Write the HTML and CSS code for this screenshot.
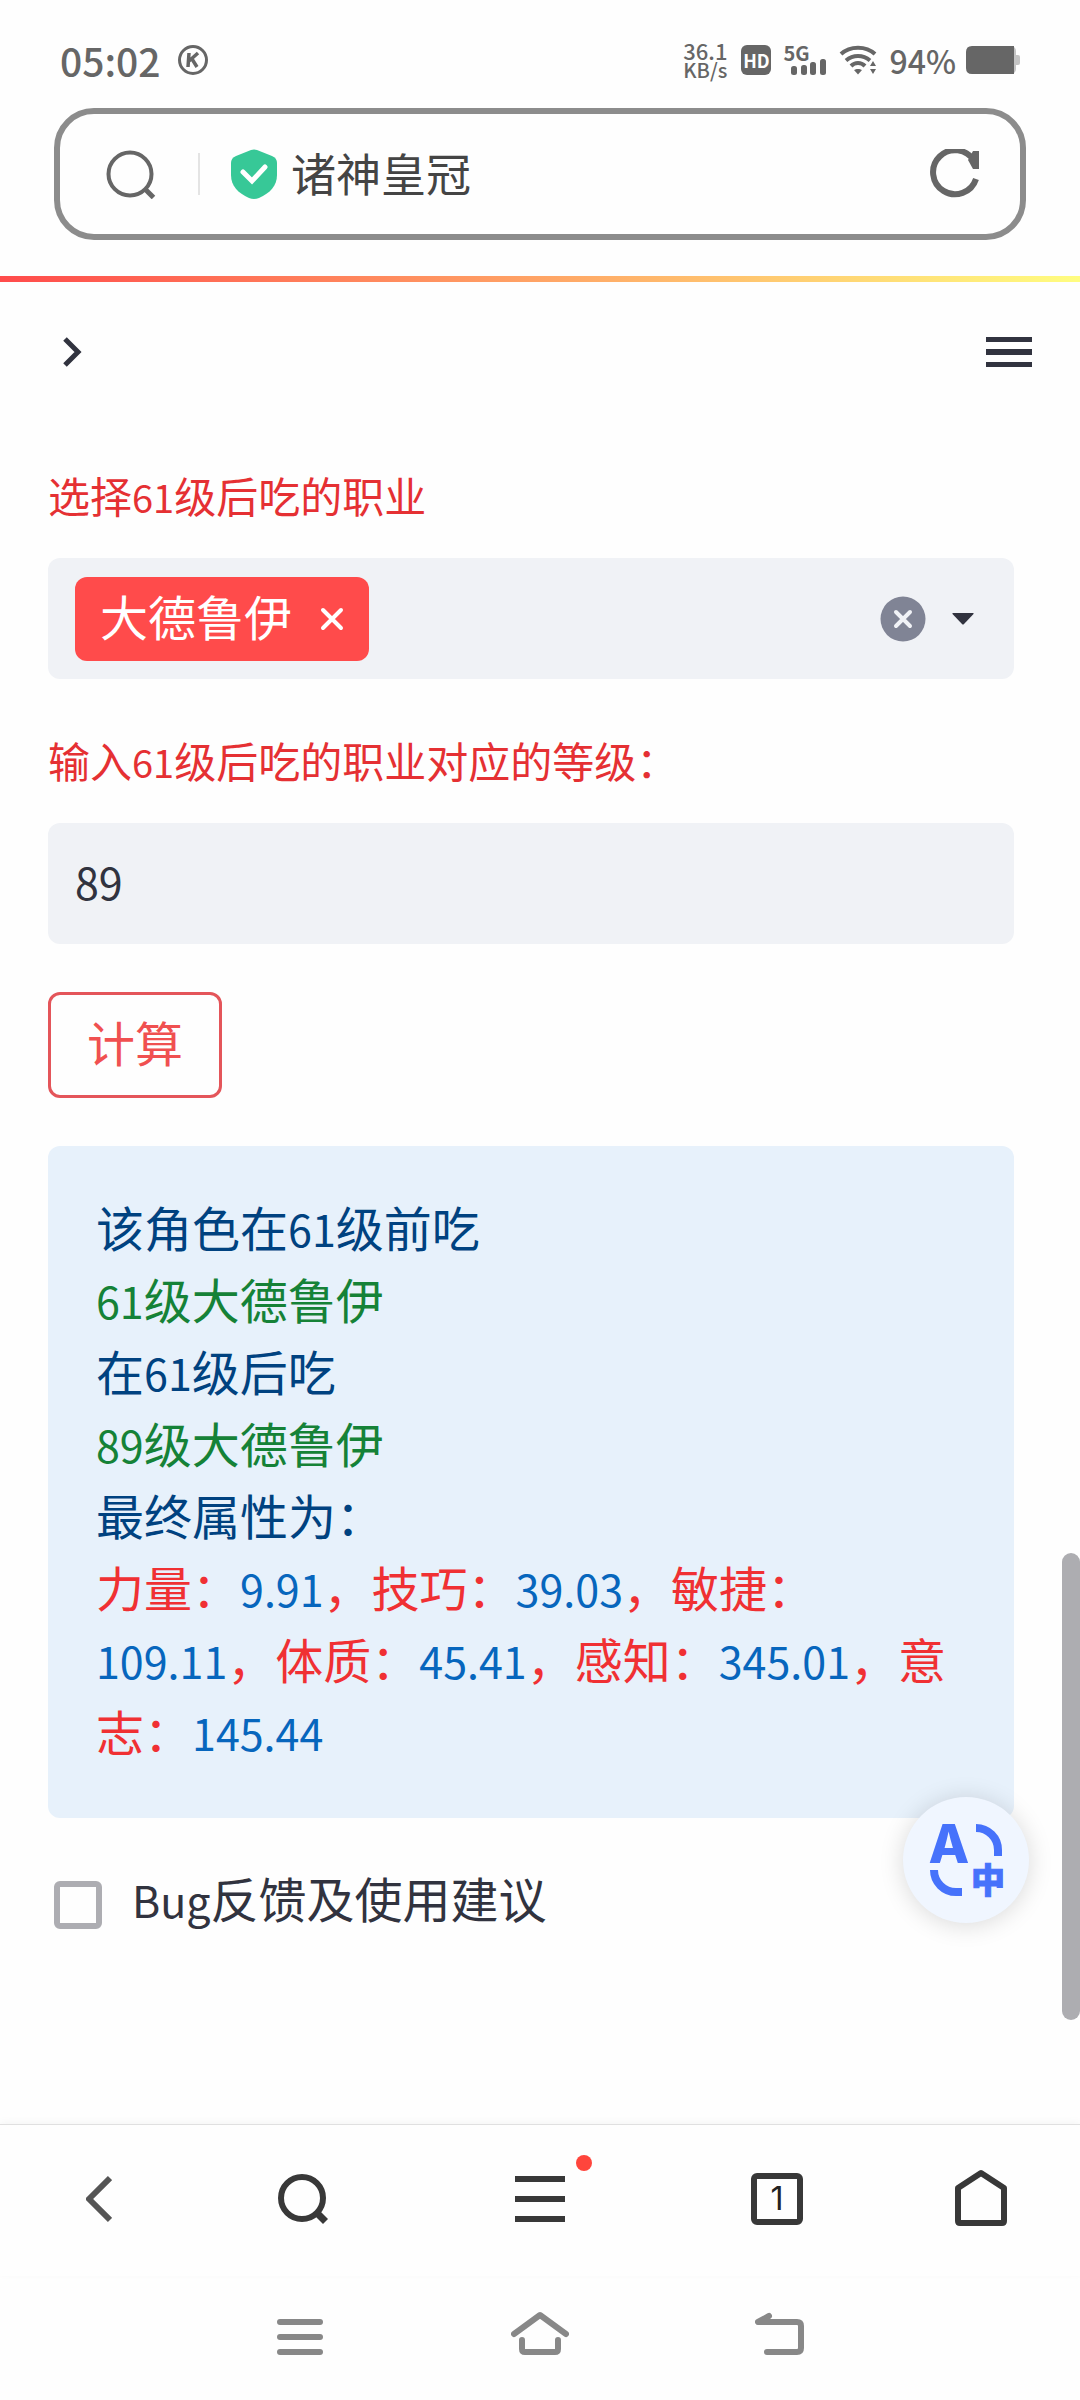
FILE: index.html
```html
<!DOCTYPE html>
<html lang="zh-CN">

<head>
  <meta charset="UTF-8" />
  <meta name="viewport" content="width=device-width, initial-scale=1.0" />
  <title>诸神皇冠</title>
  <link rel="stylesheet" href="styles.css">
</head>

<body>
  <header class="status-bar">
    <span class="clock">05:02</span>
    <svg class="badge-k" width="32" height="32" viewBox="0 0 32 32">
      <circle cx="16" cy="16" r="13.5" fill="none" stroke="#666" stroke-width="3" />
      <path d="M12 9l-1 14M21 9l-9 8M15 15l5 8" fill="none" stroke="#666" stroke-width="3.5" />
    </svg>
    <div class="status-right">
      <div class="speed"><span class="speed-value">36.1</span><span class="speed-unit">KB/s</span></div>
      <span class="hd">HD</span>
      <div class="signal">
        <span class="signal-type">5G</span>
        <svg width="36" height="17" viewBox="0 0 36 17" fill="#666">
          <rect x="0" y="8" width="6" height="9" rx="2.5" />
          <rect x="10" y="7" width="6" height="10" rx="2.5" />
          <rect x="19" y="4" width="6" height="13" rx="2.5" />
          <rect x="29" y="1" width="6" height="16" rx="2.5" />
        </svg>
      </div>
      <svg class="wifi" width="38" height="30" viewBox="0 0 38 30">
        <g fill="none" stroke="#666" stroke-width="4">
          <path d="M2 9c9-8.500 25-8.500 34 0" />
          <path d="M7 15.500c7-6 17-6 24 0" />
          <path d="M12 21c4-4 10-4 14 0" />
        </g>
        <path d="M15 25c2-1.500 6-1.500 8 0l-4 4.500z" fill="#666" />
        <path d="M29 23l5-9h4v16h-5z" fill="#fefefe" />
        <path d="M31 21l3-5 3 5zM31 24h6l-3 5z" fill="#666" />
      </svg>
      <span class="percent">94%</span>
      <svg class="battery" width="54" height="28" viewBox="0 0 54 28">
        <rect x="40" y="0" width="10" height="28" rx="5" fill="#c4c4c4" />
        <rect x="48" y="9" width="6" height="10" rx="2" fill="#c4c4c4" />
        <path d="M6 0h42v28H6q-6 0-6-6V6q0-6 6-6z" fill="#666" />
      </svg>
    </div>
  </header>

  <div class="address-bar">
    <button class="icon-button" aria-label="搜索">
      <svg width="50" height="50" viewBox="0 0 50 50" fill="none" stroke="#666" stroke-width="4">
        <circle cx="24" cy="25" r="21.500" />
        <path d="M39 40l8.500 8.500" stroke-width="5" />
      </svg>
    </button>
    <span class="divider"></span>
    <svg class="shield" width="46" height="50" viewBox="0 0 46 50">
      <path d="M20 1q3-1 6 0l15 6q5 2 5 7v12c0 11-7 18-18 23q-5 2-10 0C7 44 0 37 0 26V14q0-5 5-7z" fill="#37c897" />
      <path d="M12 23l9 9 13-14" fill="none" stroke="#fff" stroke-width="5" stroke-linecap="round" />
    </svg>
    <span class="site-title">诸神皇冠</span>
    <button class="icon-button reload" aria-label="刷新">
      <svg width="50" height="50" viewBox="0 0 50 50" fill="none" stroke="#666" stroke-width="6">
        <path d="M44 12A22 22 0 1 0 46 30" />
        <path d="M43 2h6v18h-6l-5-9z" fill="#666" stroke="none" />
      </svg>
    </button>
  </div>

  <div class="decoration"></div>

  <main class="page">
    <div class="page-header">
      <button class="icon-button" aria-label="展开侧栏">
        <svg width="20" height="32" viewBox="0 0 20 32" fill="none" stroke="#31333f" stroke-width="5">
          <path d="M3 3l13 13L3 29" />
        </svg>
      </button>
      <button class="icon-button" aria-label="菜单">
        <svg width="46" height="30" viewBox="0 0 46 30" fill="#31333f">
          <path d="M0 0h46v5H0zM0 12h46v6H0zM0 25h46v5H0z" />
        </svg>
      </button>
    </div>

    <div class="form">
      <label class="label" for="job">选择<span class="latin">61</span>级后吃的职业</label>
      <div class="select">
        <span class="tag">
          <span class="tag-text">大德鲁伊</span>
          <button class="icon-button" aria-label="移除">
            <svg width="24" height="24" viewBox="0 0 24 24" fill="none" stroke="#fff" stroke-width="4" stroke-linecap="round">
              <path d="M3 3l18 18M21 3L3 21" />
            </svg>
          </button>
        </span>
        <input id="job" class="select-input" type="text">
        <button class="icon-button" aria-label="清除">
          <svg width="46" height="46" viewBox="0 0 46 46">
            <circle cx="23" cy="23" r="22.500" fill="#808495" />
            <path d="M16 16l14 14M30 16L16 30" stroke="#f0f2f6" stroke-width="4" stroke-linecap="round" />
          </svg>
        </button>
        <button class="icon-button" aria-label="展开">
          <svg width="22" height="12" viewBox="0 0 22 12">
            <path d="M1 0h20q1 0 .5 1L12 11q-1 1-2 0L.5 1Q0 0 1 0z" fill="#31333f" />
          </svg>
        </button>
      </div>

      <label class="label" for="level">输入<span class="latin">61</span>级后吃的职业对应的等级：</label>
      <input id="level" class="text-input" type="text" value="89">

      <button class="submit">计算</button>

      <div class="info">
        <p>该角色在<span class="latin">61</span>级前吃</p>
        <p class="green"><span class="latin">61</span>级大德鲁伊</p>
        <p>在<span class="latin">61</span>级后吃</p>
        <p class="green"><span class="latin">89</span>级大德鲁伊</p>
        <p>最终属性为：</p>
        <p class="stats">力量：<span class="latin">9.91</span>，技巧：<span class="latin">39.03</span>，敏捷：<span class="latin">109.11</span>，体质：<span class="latin">45.41</span>，感知：<span class="latin">345.01</span>，意志：<span class="latin">145.44</span></p>
      </div>

      <label class="check">
        <input type="checkbox">
        <span><span class="latin">Bug</span>反馈及使用建议</span>
      </label>
    </div>

    <div class="scroll-thumb"></div>
    <button class="translate" aria-label="翻译">
      <svg width="126" height="126" viewBox="0 0 126 126">
        <g fill="none" stroke="#4672fb" stroke-width="8">
          <path d="M73 31a22 22 0 0 1 22 22v6" />
          <path d="M31 73a22 22 0 0 0 22 22h6" />
        </g>
        <text class="translate-a" x="46" y="66">A</text>
        <text class="translate-zh" x="85" y="96">中</text>
      </svg>
    </button>
  </main>

  <nav class="toolbar">
    <button class="icon-button" aria-label="后退">
      <svg width="26" height="48" viewBox="0 0 26 48" fill="none" stroke="#555" stroke-width="6" stroke-linejoin="round">
        <path d="M24 3L3 24l21 21" />
      </svg>
    </button>
    <button class="icon-button" aria-label="搜索">
      <svg width="50" height="50" viewBox="0 0 50 50" fill="none" stroke="#383838" stroke-width="6">
        <circle cx="24" cy="24" r="21" />
        <path d="M39 39l8.500 8.500" stroke-width="7" />
      </svg>
    </button>
    <button class="icon-button menu" aria-label="菜单">
      <svg width="50" height="46" viewBox="0 0 50 46" fill="#383838">
        <path d="M0 0h50v6H0zM0 20h50v6H0zM0 40h50v6H0z" />
      </svg>
      <span class="dot"></span>
    </button>
    <button class="icon-button tabs">1</button>
    <button class="icon-button home" aria-label="主页">
      <svg width="52" height="60" viewBox="0 0 52 60" fill="none" stroke="#383838" stroke-width="6" stroke-linejoin="round">
        <path d="M3 19L26 4l23 15v33q0 2-2 2H5q-2 0-2-2z" />
      </svg>
    </button>
  </nav>

  <nav class="system-nav">
    <button class="icon-button" aria-label="最近任务">
      <svg width="46" height="36" viewBox="0 0 46 36" fill="#888">
        <rect width="46" height="6" rx="3" />
        <rect y="15" width="46" height="6" rx="3" />
        <rect y="30" width="46" height="6" rx="3" />
      </svg>
    </button>
    <button class="icon-button" aria-label="主屏幕">
      <svg width="58" height="44" viewBox="0 0 58 44" fill="none" stroke="#888" stroke-width="6" stroke-linecap="round" stroke-linejoin="round">
        <path d="M3 23L29 4l26 19M11 29v9q0 3 3 3h30q3 0 3-3v-9" />
      </svg>
    </button>
    <button class="icon-button" aria-label="返回">
      <svg width="50" height="44" viewBox="0 0 50 44" fill="none" stroke="#888" stroke-width="6" stroke-linecap="round" stroke-linejoin="round">
        <path d="M14 5L3 11h39q4 0 4 4v22q0 4-4 4H12" />
      </svg>
    </button>
  </nav>
</body>

</html>
```
FILE: styles.css
```css
:root {
  --text: #31333f;
  --status: #666;
  --field: #f0f2f6;
  --radius: 12px;
}

* {
  box-sizing: border-box;
}

body {
  display: flex;
  flex-direction: column;
  min-height: 100vh;
  margin: 0;
  background: #fefefe;
  color: var(--text);
  font-family: "Noto Sans CJK SC", sans-serif;
  font-size: 48px;
  line-height: 72px;
}

button,
input {
  font: inherit;
  color: inherit;
}

p {
  margin: 0;
}

svg {
  display: block;
}

.icon-button {
  display: flex;
  align-items: center;
  justify-content: center;
  padding: 0;
  border: 0;
  background: none;
}

/* latin letters and digits sit a little smaller than the hanzi */
.latin {
  font-size: 43px;
  line-height: 1;
}

/* status bar */
.status-bar {
  display: flex;
  align-items: center;
  height: 108px;
  padding: 12px 60px 0;
  color: var(--status);
  line-height: 32px;
}

.clock {
  font-size: 39px;
  font-weight: 500;
}

.badge-k {
  margin-left: 16px;
}

.status-right {
  display: flex;
  align-items: center;
  margin-left: auto;
}

.speed {
  display: flex;
  flex-direction: column;
  font-weight: 500;
  line-height: 19px;
}

.speed-value {
  font-size: 22px;
}

.speed-unit {
  font-size: 20px;
}

.hd {
  width: 30px;
  height: 30px;
  margin-left: 14px;
  border-radius: 6px;
  background: var(--status);
  color: #fff;
  font-size: 18px;
  font-weight: 700;
  line-height: 30px;
  text-align: center;
}

.signal {
  display: flex;
  flex-direction: column;
  align-items: flex-end;
  width: 44px;
  height: 30px;
  margin-left: 12px;
}

.signal-type {
  align-self: flex-start;
  height: 13px;
  font-size: 20px;
  font-weight: 700;
  line-height: 15px;
}

.wifi {
  margin-left: 12px;
}

.percent {
  margin-left: 12px;
  font-size: 32px;
  font-weight: 500;
}

.battery {
  margin-left: 10px;
}

/* address bar */
.address-bar {
  display: flex;
  align-items: center;
  height: 132px;
  margin: 0 54px;
  padding: 0 40px 0 46px;
  border: 6px solid #8c8c8c;
  border-radius: 40px;
}

.divider {
  width: 2px;
  height: 42px;
  margin: 0 31px 0 42px;
  background: #e4e4e4;
}

.site-title {
  margin-left: 14px;
  padding-bottom: 2px;
  color: #444;
  font-size: 45px;
}

.reload {
  margin-left: auto;
}

.decoration {
  height: 6px;
  margin-top: 36px;
  background: linear-gradient(90deg, #ff4b4b, #fffd80);
}

/* page */
.page {
  position: relative;
  flex: 1;
}

.page-header {
  display: flex;
  align-items: center;
  justify-content: space-between;
  height: 140px;
  padding: 0 48px 0 62px;
}

.form {
  padding: 42px 66px 0 48px;
}

.label {
  display: block;
  margin-bottom: 32px;
  color: #e53033;
  font-size: 42px;
  line-height: 62px;
}

.label .latin {
  font-size: 38px;
}

.select {
  display: flex;
  align-items: center;
  gap: 26px;
  height: 121px;
  margin-bottom: 50px;
  padding: 0 40px 0 27px;
  border-radius: var(--radius);
  background: var(--field);
}

.tag {
  display: flex;
  align-items: center;
  gap: 28px;
  height: 84px;
  padding: 0 25px;
  border-radius: var(--radius);
  background: #ff4b4b;
  color: #fff;
}

.tag-text {
  padding-bottom: 8px;
}

.select-input {
  flex: 1;
  min-width: 0;
  border: 0;
  background: none;
}

.text-input {
  display: block;
  width: 100%;
  height: 121px;
  margin-bottom: 48px;
  padding: 0 27px 6px;
  border: 0;
  border-radius: var(--radius);
  background: var(--field);
  font-size: 43px;
}

.submit {
  display: block;
  height: 106px;
  padding: 0 36px 8px;
  border: 3px solid #e4555a;
  border-radius: var(--radius);
  background: none;
  color: #f05050;
}

.info {
  margin-top: 48px;
  padding: 44px 48px 52px;
  border-radius: var(--radius);
  background: #e7f1fb;
  color: #004280;
}

.green {
  color: #158237;
}

.stats {
  color: #f03033;
}

.stats .latin {
  color: #0766bd;
}

.check {
  display: flex;
  align-items: flex-start;
  gap: 30px;
  margin-top: 43px;
  padding-left: 6px;
}

.check input {
  width: 48px;
  height: 48px;
  margin: 20px 0 0;
  border: 6px solid #adadb2;
  border-radius: 6px;
  appearance: none;
}

/* floating over the page */
.scroll-thumb {
  position: absolute;
  right: 0;
  bottom: 104px;
  width: 18px;
  height: 467px;
  border-radius: 9px;
  background: #adadb1;
}

.translate {
  position: absolute;
  right: 51px;
  bottom: 201px;
  width: 126px;
  height: 126px;
  padding: 0;
  border: 0;
  border-radius: 50%;
  background: #f0f6ff;
  box-shadow: 0 2px 24px rgba(0, 0, 0, 0.15);
}

.translate text {
  fill: #4672fb;
  text-anchor: middle;
}

.translate-a {
  font-family: Inter, sans-serif;
  font-size: 53px;
  font-weight: 800;
}

.translate-zh {
  font-size: 34px;
  font-weight: 900;
  stroke: #4672fb;
  stroke-width: 1px;
}

/* browser toolbar */
.toolbar {
  display: grid;
  grid-template-columns: 33fr 35fr 44fr 35fr 33fr;
  align-items: center;
  justify-items: center;
  height: 152px;
  padding-bottom: 4px;
  border-top: 1px solid #e0e0e0;
  box-shadow: 0 -2px 8px rgba(0, 0, 0, 0.04);
}

.menu {
  position: relative;
}

.dot {
  position: absolute;
  top: -21px;
  right: -27px;
  width: 16px;
  height: 16px;
  border-radius: 50%;
  background: #ff453c;
}

.tabs {
  width: 52px;
  height: 52px;
  border: 6px solid #383838;
  border-radius: 6px;
  color: #222;
  font-family: Inter, sans-serif;
  font-size: 32px;
  line-height: 40px;
}

/* system navigation */
.system-nav {
  display: grid;
  grid-template-columns: repeat(3, 1fr);
  align-items: end;
  justify-items: center;
  height: 124px;
  padding: 0 16.667% 45px;
}
```
